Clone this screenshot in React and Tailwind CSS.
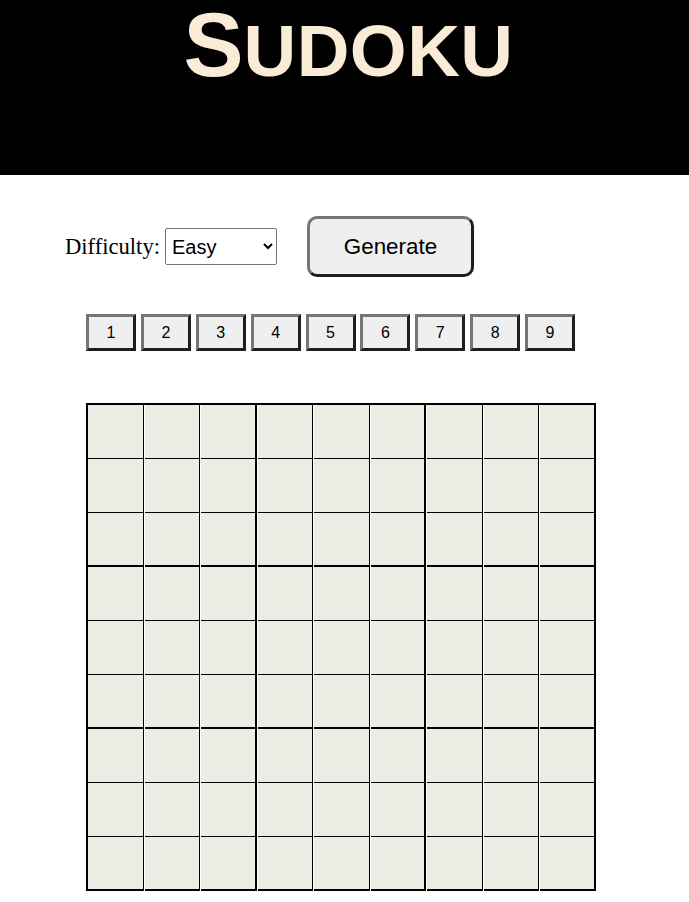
import React from "react";

const SANS = "font-['Liberation_Sans',Arial,sans-serif]";

export default function App() {
  const digits = [1, 2, 3, 4, 5, 6, 7, 8, 9];
  const cells = Array.from({ length: 81 }, (_, i) => i);
  return (
    <div className="min-h-[902px] w-[689px] bg-white">
      <header className="h-[175px] bg-black pl-[8px] pt-[2px]">
        <h1
          className={`${SANS} text-center font-bold leading-[0.97] text-[#faebd7] text-[90px]`}
        >
          S<span className="text-[73px] tracking-[0.5px]">UDOKU</span>
        </h1>
      </header>

      <div className="mt-[41px] flex items-center pl-[65px]">
        <label className="font-['Liberation_Serif','Times_New_Roman',serif] text-[22.6px] text-black">
          Difficulty:
        </label>
        <select
          defaultValue="Easy"
          className={`${SANS} ml-[5px] h-[37px] w-[112px] rounded-[2px] border border-[#767676] bg-white pl-[2px] text-[20px] text-black`}
        >
          <option>Easy</option>
          <option>Medium</option>
          <option>Hard</option>
        </select>
        <button
          className={`${SANS} ml-[30px] h-[61px] w-[167px] rounded-[10px] border-[3px] border-t-[#767676] border-l-[#767676] border-r-[#1f1f1f] border-b-[#1f1f1f] bg-[#efefef] text-[22.4px] text-black`}
        >
          Generate
        </button>
      </div>

      <div className="mt-[37px] flex gap-[4.875px] pl-[86px]">
        {digits.map((d) => (
          <button
            key={d}
            className={`${SANS} h-[37px] w-[50px] border-[3px] border-t-[#767676] border-l-[#767676] border-r-[#1f1f1f] border-b-[#1f1f1f] bg-[#efefef] text-[16px] text-black`}
          >
            {d}
          </button>
        ))}
      </div>

      <div className="ml-[86px] mt-[52px] w-[510px] border-l-2 border-t-2 border-black bg-white">
        <div className="grid grid-cols-9 gap-x-px">
          {cells.map((i) => {
            const c = i % 9;
            const r = Math.floor(i / 9);
            const thickR = c === 2 || c === 5 || c === 8;
            const thickB = r === 2 || r === 5 || r === 8;
            return (
              <div
                key={i}
                className={`h-[54px] border-black bg-[#ecece4] ${
                  thickR ? "border-r-2" : "border-r"
                } ${thickB ? "border-b-2" : "border-b"}`}
              />
            );
          })}
        </div>
      </div>
    </div>
  );
}
